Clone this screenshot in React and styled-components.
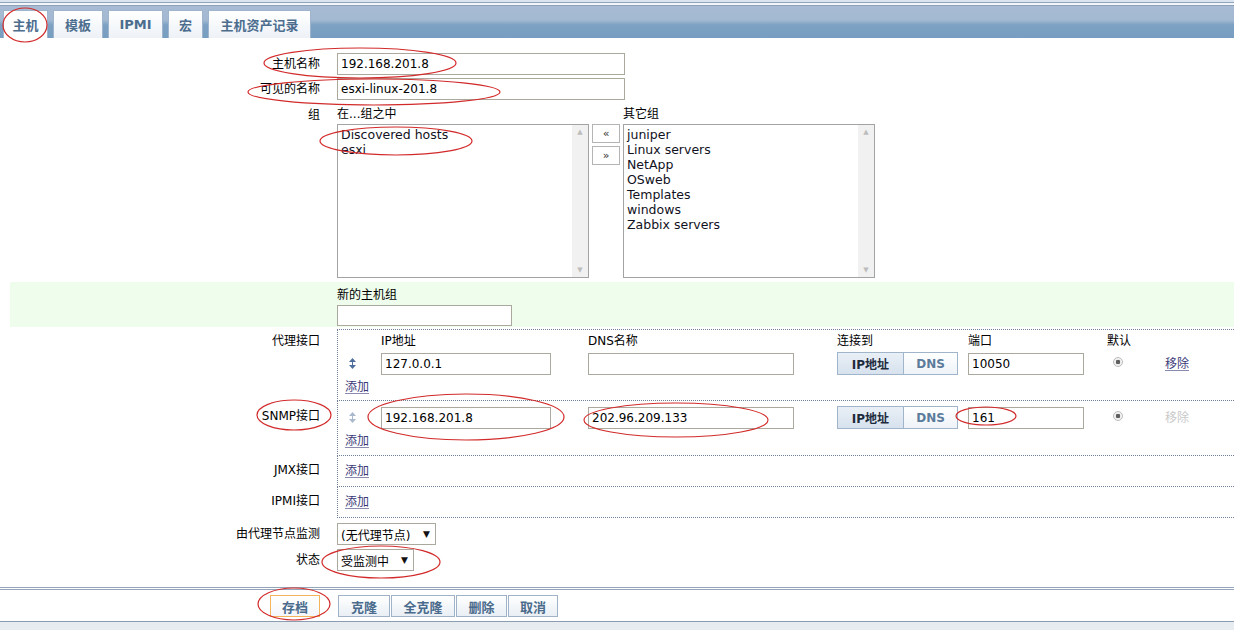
import styled, { createGlobalStyle } from 'styled-components';

const GlobalStyle = createGlobalStyle`
  html, body {
    margin: 0;
    padding: 0;
    background: #fff;
    overflow: hidden;
  }
  body {
    font-family: "DejaVu Sans", "Noto Sans CJK SC", sans-serif;
    font-size: 12px;
    color: #000;
  }
  #root {
    position: relative;
    width: 1234px;
    height: 630px;
  }
`;

const Header = styled.div`
  height: 38px;
  box-sizing: border-box;
  padding-left: 3px;
  display: flex;
  align-items: flex-end;
  gap: 5px;
  background: linear-gradient(to bottom,
    #dbe5f0 0, #dbe5f0 2px,
    #91a4bc 2px, #91a4bc 3px,
    #f2f6fa 3px, #f2f6fa 5px,
    #8ea1b9 5px, #8ea1b9 6px,
    #a7bcd4 6px, #a3b9d1 20px,
    #7ca1c3 25px, #779dc0 38px);
`;

const Tab = styled.div`
  width: ${p => p.$w}px;
  height: 28px;
  box-sizing: border-box;
  border: 1px solid #9fb5cd;
  border-bottom: none;
  background: ${p => (p.$active ? '#fff' : 'linear-gradient(#ffffff, #edf2f7)')};
  color: #4c6d8e;
  font-weight: bold;
  font-size: 13px;
  display: flex;
  align-items: center;
  justify-content: center;
`;

const Form = styled.div`
  padding-top: 15px;
`;

const Row = styled.div`
  display: flex;
  margin-top: ${p => p.$mt || 0}px;
  ${p => p.$green && 'margin-left: 10px; background: #effdec;'}
`;

const Label = styled.div`
  width: ${p => p.$w || 320}px;
  flex: none;
  box-sizing: border-box;
  text-align: right;
  line-height: 16px;
  padding-top: ${p => p.$pt || 0}px;
  white-space: nowrap;
`;

const Field = styled.div`
  margin-left: 17px;
  flex: 1;
  padding-top: ${p => p.$pt || 0}px;
  padding-bottom: ${p => p.$pb || 0}px;
`;

const Input = styled.input`
  display: block;
  width: ${p => p.$w}px;
  height: ${p => p.$h || 22}px;
  box-sizing: border-box;
  border: 1px solid #aba89e;
  padding: 0 3px;
  margin: 0;
  font-family: "DejaVu Sans", "Noto Sans CJK SC", sans-serif;
  font-size: 12px;
  color: #000;
  background: #fff;
  outline: none;
`;

const SmallTitle = styled.div`
  line-height: 16px;
  height: 16px;
  margin-bottom: 2px;
`;

const GroupWrap = styled.div`
  display: flex;
  gap: 3px;
`;

const ListBox = styled.div`
  width: 252px;
  height: 154px;
  box-sizing: border-box;
  border: 1px solid #a3a3a3;
  display: flex;
`;

const ListItems = styled.div`
  flex: 1;
  padding: 2px 3px;
  line-height: 15px;
  color: #111122;
  font-size: 12.5px;
`;

const ScrollBar = styled.div`
  width: 16px;
  background: #f1f1f1;
  display: flex;
  flex-direction: column;
  justify-content: space-between;
  align-items: center;
  color: #bdbdbd;
  font-size: 7px;
  line-height: 14px;
`;

const MoveCol = styled.div`
  display: flex;
  flex-direction: column;
  gap: 3px;
  padding-top: 18px;
`;

const MoveButton = styled.div`
  width: 28px;
  height: 19px;
  box-sizing: border-box;
  border: 1px solid #b4b4b4;
  background: #fff;
  font-size: 11px;
  display: flex;
  align-items: center;
  justify-content: center;
  color: #333;
`;

const IfaceBox = styled.div`
  flex: 1;
  margin-left: 17px;
  border-left: 1px dotted #6e7f99;
  border-bottom: 1px dotted #6e7f99;
  ${p => p.$first && 'border-top: 1px dotted #6e7f99;'}
  padding-top: ${p => p.$pt || 0}px;
  padding-bottom: ${p => p.$pb || 0}px;
`;

const IfaceGrid = styled.div`
  display: grid;
  grid-template-columns: 43px 207px 249px 131px 139px 58px 1fr;
  align-items: center;
  margin-bottom: ${p => p.$mb || 0}px;
`;

const HeadCell = styled.div`
  line-height: 16px;
  font-size: 12px;
`;

const Handle = styled.svg`
  margin-left: 11px;
  display: block;
`;

const ConnectGroup = styled.div`
  display: flex;
  height: 23px;
`;

const ConnectButton = styled.div`
  width: ${p => p.$w}px;
  box-sizing: border-box;
  border: 1px solid #a0b4ca;
  ${p => !p.$first && 'border-left: none;'}
  background: ${p => (p.$active ? 'linear-gradient(#e9eff6, #d7e2ee)' : 'linear-gradient(#ffffff, #eef3f8)')};
  color: ${p => (p.$active ? '#1d2c3d' : '#5b7b9b')};
  font-weight: bold;
  font-size: 12px;
  display: flex;
  align-items: center;
  justify-content: center;
`;

const Radio = styled.div`
  width: 10px;
  height: 10px;
  margin-left: 6px;
  margin-top: -4px;
  box-sizing: border-box;
  border-radius: 50%;
  border: 1px solid #bdbdbd;
  background: radial-gradient(circle, #5f5f5f 0, #5f5f5f 2px, #ececec 2.5px, #f7f7f7 100%);
`;

const LinkText = styled.span`
  color: ${p => (p.$disabled ? '#c9c9c9' : '#3b3a78')};
  text-decoration: ${p => (p.$disabled ? 'none' : 'underline')};
  text-decoration-color: ${p => (p.$disabled ? 'transparent' : '#8a89b0')};
  text-underline-offset: 2px;
  line-height: 16px;
`;

const AddLine = styled.div`
  padding-left: 7px;
  line-height: 16px;
  margin-top: ${p => p.$mt || 0}px;
`;

const SelectBox = styled.div`
  width: ${p => p.$w}px;
  height: 22px;
  box-sizing: border-box;
  border: 1px solid #aba89e;
  padding: 0 5px 0 3px;
  display: flex;
  align-items: center;
  justify-content: space-between;
  white-space: nowrap;
`;

const Caret = styled.span`
  font-size: 9px;
  color: #111;
`;

const Footer = styled.div`
  margin-top: 16px;
  border-top: 3px double #94a5ba;
  border-bottom: 1px solid #8c9cb1;
  padding: 5px 0 4px;
  display: flex;
`;

const FooterGroup = styled.div`
  display: flex;
  gap: 1px;
  margin-left: ${p => p.$ml}px;
`;

const ActionButton = styled.div`
  width: ${p => p.$w}px;
  height: 22px;
  box-sizing: border-box;
  border: 1px solid ${p => (p.$focus ? '#f3b45c' : '#9fb2c8')};
  background: ${p => (p.$focus ? 'linear-gradient(#ffffff, #f3f6fa)' : 'linear-gradient(#ffffff, #e9eff5)')};
  color: #4a6b8c;
  font-weight: bold;
  font-size: 13px;
  display: flex;
  align-items: center;
  justify-content: center;
`;

const BottomStrip = styled.div`
  height: 10px;
  background: #e7ecf1;
`;

const Marks = styled.svg`
  position: absolute;
  left: 0;
  top: 0;
  pointer-events: none;
`;

const tabs = [
  { t: '主机', w: 45, active: true },
  { t: '模板', w: 50 },
  { t: 'IPMI', w: 55 },
  { t: '宏', w: 35 },
  { t: '主机资产记录', w: 103 },
];

const ellipses = [
  [25, 25, 22, 17],
  [360, 63, 96, 15],
  [374, 92, 126, 13],
  [396, 141, 76, 14],
  [294, 415, 37, 15],
  [466, 417, 98, 23],
  [676, 420, 92, 17],
  [986, 416, 30, 9],
  [381, 562, 59, 16],
  [294, 604, 36, 16],
];

function HandleIcon({ faded }) {
  const c = faded ? '#a9b8cc' : '#4f6e9c';
  return (
    <Handle width="7" height="11" viewBox="0 0 7 11">
      <path d="M3.5 0 L7 4 L0 4 Z" fill={c} />
      <path d="M3.5 11 L7 7 L0 7 Z" fill={c} />
      <rect x="3" y="3" width="1" height="5" fill={c} />
    </Handle>
  );
}

function IfaceRow({ ip, dns, port, faded }) {
  return (
    <IfaceGrid>
      <HandleIcon faded={faded} />
      <Input $w={170} defaultValue={ip} readOnly />
      <Input $w={206} defaultValue={dns} readOnly />
      <ConnectGroup>
        <ConnectButton $w={67} $first $active>IP地址</ConnectButton>
        <ConnectButton $w={54}>DNS</ConnectButton>
      </ConnectGroup>
      <Input $w={116} defaultValue={port} readOnly />
      <Radio />
      <LinkText $disabled={faded}>移除</LinkText>
    </IfaceGrid>
  );
}

export default function App() {
  return (
    <>
      <GlobalStyle />
      <Header>
        {tabs.map(tab => (
          <Tab key={tab.t} $w={tab.w} $active={tab.active}>{tab.t}</Tab>
        ))}
      </Header>

      <Form>
        <Row>
          <Label $pt={3}>主机名称</Label>
          <Field><Input $w={288} defaultValue="192.168.201.8" readOnly /></Field>
        </Row>
        <Row $mt={3}>
          <Label $pt={3}>可见的名称</Label>
          <Field><Input $w={288} defaultValue="esxi-linux-201.8" readOnly /></Field>
        </Row>

        <Row $mt={6}>
          <Label $pt={1}>组</Label>
          <Field>
            <GroupWrap>
              <div>
                <SmallTitle>在...组之中</SmallTitle>
                <ListBox>
                  <ListItems>
                    <div>Discovered hosts</div>
                    <div>esxi</div>
                  </ListItems>
                  <ScrollBar><span>▲</span><span>▼</span></ScrollBar>
                </ListBox>
              </div>
              <MoveCol>
                <MoveButton>«</MoveButton>
                <MoveButton>»</MoveButton>
              </MoveCol>
              <div>
                <SmallTitle>其它组</SmallTitle>
                <ListBox>
                  <ListItems>
                    <div>juniper</div>
                    <div>Linux servers</div>
                    <div>NetApp</div>
                    <div>OSweb</div>
                    <div>Templates</div>
                    <div>windows</div>
                    <div>Zabbix servers</div>
                  </ListItems>
                  <ScrollBar><span>▲</span><span>▼</span></ScrollBar>
                </ListBox>
              </div>
            </GroupWrap>
          </Field>
        </Row>

        <Row $mt={4} $green>
          <Label $w={310} />
          <Field $pt={5} $pb={1}>
            <SmallTitle>新的主机组</SmallTitle>
            <Input $w={175} $h={21} readOnly />
          </Field>
        </Row>

        <Row $mt={2}>
          <Label $pt={4}>代理接口</Label>
          <IfaceBox $first $pt={3} $pb={5}>
            <IfaceGrid $mb={3}>
              <span />
              <HeadCell>IP地址</HeadCell>
              <HeadCell>DNS名称</HeadCell>
              <HeadCell>连接到</HeadCell>
              <HeadCell>端口</HeadCell>
              <HeadCell>默认</HeadCell>
              <span />
            </IfaceGrid>
            <IfaceRow ip="127.0.0.1" dns="" port="10050" />
            <AddLine $mt={4}><LinkText>添加</LinkText></AddLine>
          </IfaceBox>
        </Row>

        <Row>
          <Label $pt={7}>SNMP接口</Label>
          <IfaceBox $pt={5} $pb={6}>
            <IfaceRow ip="192.168.201.8" dns="202.96.209.133" port="161" faded />
            <AddLine $mt={4}><LinkText>添加</LinkText></AddLine>
          </IfaceBox>
        </Row>

        <Row>
          <Label $pt={6}>JMX接口</Label>
          <IfaceBox $pt={7} $pb={7}>
            <AddLine><LinkText>添加</LinkText></AddLine>
          </IfaceBox>
        </Row>

        <Row>
          <Label $pt={6}>IPMI接口</Label>
          <IfaceBox $pt={7} $pb={7}>
            <AddLine><LinkText>添加</LinkText></AddLine>
          </IfaceBox>
        </Row>

        <Row $mt={5}>
          <Label $pt={3}>由代理节点监测</Label>
          <Field>
            <SelectBox $w={99}>(无代理节点)<Caret>▼</Caret></SelectBox>
          </Field>
        </Row>

        <Row $mt={4}>
          <Label $pt={3}>状态</Label>
          <Field>
            <SelectBox $w={77}>受监测中<Caret>▼</Caret></SelectBox>
          </Field>
        </Row>
      </Form>

      <Footer>
        <FooterGroup $ml={270}>
          <ActionButton $w={50} $focus>存档</ActionButton>
        </FooterGroup>
        <FooterGroup $ml={18}>
          <ActionButton $w={52}>克隆</ActionButton>
          <ActionButton $w={64}>全克隆</ActionButton>
          <ActionButton $w={51}>删除</ActionButton>
          <ActionButton $w={50}>取消</ActionButton>
        </FooterGroup>
      </Footer>
      <BottomStrip />

      <Marks width="1234" height="630" viewBox="0 0 1234 630">
        {ellipses.map(([cx, cy, rx, ry], i) => (
          <ellipse key={i} cx={cx} cy={cy} rx={rx} ry={ry} fill="none" stroke="#d22a2a" strokeWidth="1.2" />
        ))}
      </Marks>
    </>
  );
}
